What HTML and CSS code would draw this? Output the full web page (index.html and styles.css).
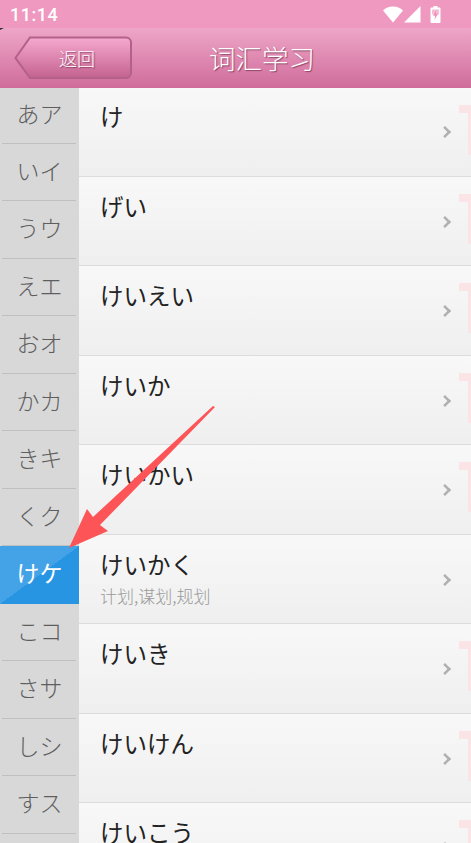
FILE: index.html
```html
<!DOCTYPE html>
<html lang="en">
<head>
    <meta charset="UTF-8">
    <meta name="viewport" content="width=device-width, initial-scale=1.0">
    <title>词汇学习</title>
    <link rel="stylesheet" href="styles.css">
</head>
<body>
    <!-- Status bar -->
    <div class="status-bar">
        <span class="clock">11:14</span>
        <div class="status-icons">
            <svg width="20" height="17" viewBox="0 0 20 17"><path d="M0 4.500C2.600 1.800 6 .5 10 .5s7.400 1.300 10 4L10 16.500z" fill="#fff"/></svg>
            <svg width="17" height="17" viewBox="0 0 17 17"><path d="M0 16.500L16.500 0v16.500z" fill="#fff"/></svg>
            <svg class="battery" width="11" height="17" viewBox="0 0 11 17"><path d="M3.500 0h4v1.500h2a1 1 0 0 1 1 1V16a1 1 0 0 1-1 1h-8a1 1 0 0 1-1-1V2.500a1 1 0 0 1 1-1h2z" fill="#fff"/><path d="M2 3.500h7v5H2z" fill="#f7bcd6"/><path d="M6.500 3.500L3 9.800h2.200L4.400 14 8 7.800H5.800z" fill="#ee90b9"/></svg>
        </div>
    </div>

    <!-- Title bar -->
    <header class="title-bar">
        <div class="back-button">
            <svg class="back-shape" width="119" height="44" viewBox="0 0 119 44">
                <defs>
                    <linearGradient id="backFill" x1="0" y1="0" x2="0" y2="1">
                        <stop offset="0" stop-color="#f6a9cf"/>
                        <stop offset="1" stop-color="#c4628f"/>
                    </linearGradient>
                </defs>
                <path d="M16 1.500H112a5 5 0 0 1 5 5V37a5 5 0 0 1-5 5H16L1.500 22z" fill="url(#backFill)" stroke="#b3608a" stroke-width="2"/>
            </svg>
            <span class="back-label">返回</span>
        </div>
        <h1>词汇学习</h1>
    </header>

    <main class="content">
        <!-- Kana index -->
        <nav class="kana-list">
            <div class="kana">あア</div>
            <div class="kana">いイ</div>
            <div class="kana">うウ</div>
            <div class="kana">えエ</div>
            <div class="kana">おオ</div>
            <div class="kana">かカ</div>
            <div class="kana">きキ</div>
            <div class="kana">くク</div>
            <div class="kana active">けケ</div>
            <div class="kana">こコ</div>
            <div class="kana">さサ</div>
            <div class="kana">しシ</div>
            <div class="kana">すス</div>
        </nav>

        <!-- Word list -->
        <div class="word-list">
            <div class="word"><div class="word-text">け</div><span class="chevron"></span><span class="mark"></span></div>
            <div class="word"><div class="word-text">げい</div><span class="chevron"></span><span class="mark"></span></div>
            <div class="word"><div class="word-text">けいえい</div><span class="chevron"></span><span class="mark"></span></div>
            <div class="word"><div class="word-text">けいか</div><span class="chevron"></span><span class="mark"></span></div>
            <div class="word"><div class="word-text">けいかい</div><span class="chevron"></span><span class="mark"></span></div>
            <div class="word"><div class="word-text">けいかく</div><div class="word-meaning">计划,谋划,规划</div><span class="chevron"></span></div>
            <div class="word"><div class="word-text">けいき</div><span class="chevron"></span><span class="mark"></span></div>
            <div class="word"><div class="word-text">けいけん</div><span class="chevron"></span><span class="mark"></span></div>
            <div class="word"><div class="word-text">けいこう</div><span class="chevron"></span><span class="mark"></span></div>
        </div>
    </main>

    <!-- Red annotation arrow -->
    <svg class="arrow" width="471" height="843" viewBox="0 0 471 843">
        <path d="M215 407L100 525L108 531L69 548L87 509L93 517L213 406z" fill="#fd5458"/>
    </svg>
</body>
</html>
```

FILE: styles.css
```css
html, body {
    margin: 0;
    padding: 0;
    height: 100%;
    overflow: hidden;
}

body {
    position: relative;
    display: flex;
    flex-direction: column;
    font-family: "Noto Sans CJK JP", "Noto Sans", sans-serif;
    background-color: #f5f5f5;
}

.status-bar {
    height: 28px;
    flex: none;
    display: flex;
    justify-content: space-between;
    align-items: center;
    padding: 0 30px 0 10px;
    background-color: #f099c0;
    color: #fff;
}

.clock {
    font-family: Roboto, sans-serif;
    font-size: 18px;
    font-weight: 500;
    letter-spacing: 0.5px;
}

.status-icons {
    display: flex;
    align-items: center;
    gap: 1px;
}

.status-icons svg {
    display: block;
}

.status-icons .battery {
    margin-left: 8px;
}

.title-bar {
    height: 60px;
    flex: none;
    box-sizing: border-box;
    padding-left: 53px;
    display: flex;
    align-items: center;
    justify-content: center;
    position: relative;
    background: linear-gradient(to bottom, #eea6c8, #cf6c9a);
}

.title-bar::before {
    content: "";
    position: absolute;
    left: 0;
    top: 0;
    border-top: 2px solid #333;
    border-right: 4px solid transparent;
}

.title-bar h1 {
    margin: 0;
    font-size: 26.500px;
    font-weight: 300;
    line-height: 60px;
    color: #fff;
    text-shadow: 1px 1px 1px rgba(90, 30, 60, 0.6);
}

.back-button {
    position: absolute;
    left: 14px;
    top: 8px;
    width: 119px;
    height: 44px;
}

.back-shape {
    display: block;
}

.back-label {
    position: absolute;
    left: 45px;
    top: 0;
    line-height: 44px;
    font-size: 18px;
    font-weight: 300;
    color: #fff;
    text-shadow: 1px 1px 1px rgba(90, 30, 60, 0.6);
}

.content {
    flex: 1;
    min-height: 0;
    display: flex;
    overflow: hidden;
}

.kana-list {
    width: 79px;
    flex: none;
    background-color: #d8d8d8;
}

.kana {
    height: 57.5px;
    box-sizing: border-box;
    padding-bottom: 6px;
    display: flex;
    align-items: center;
    justify-content: center;
    position: relative;
    font-size: 23px;
    font-weight: 300;
    color: #5e5e5e;
}

.kana:first-child {
    height: 55.800px;
}

.kana::after {
    content: "";
    position: absolute;
    left: 2px;
    right: 3px;
    bottom: 0;
    height: 1px;
    background-color: #c0c0c0;
}

.kana.active {
    color: #fff;
    font-weight: 400;
    background: linear-gradient(to bottom right, #44a3e6 50%, #2795e2 50%);
}

.kana.active::after {
    left: 79px;
    right: auto;
    bottom: 22px;
    width: 0;
    height: 0;
    background: none;
    border-top: 5px solid transparent;
    border-bottom: 5px solid transparent;
    border-left: 4px solid #2795e2;
}

.word-list {
    flex: 1;
    min-width: 0;
}

.word {
    height: 89.5px;
    box-sizing: border-box;
    padding: 13px 0 0 21px;
    position: relative;
    overflow: hidden;
    background: linear-gradient(to bottom, #f8f8f8, #efefef);
    border-bottom: 1px solid #dcdcdc;
}

.word:first-child {
    height: 88.5px;
    padding-top: 12px;
}

.word-text {
    font-size: 23.500px;
    font-weight: 400;
    line-height: 32px;
    color: #222;
}

.word-meaning {
    font-size: 17px;
    font-weight: 300;
    line-height: 24px;
    margin-top: 4px;
    color: #999;
}

.chevron {
    position: absolute;
    left: 361px;
    top: 40px;
    width: 7px;
    height: 7px;
    border-top: 3px solid #b0b0b0;
    border-right: 3px solid #b0b0b0;
    transform: rotate(45deg) scale(0.85);
}

.word:first-child .chevron {
    top: 39px;
}

.mark {
    position: absolute;
    right: 0;
    top: 17px;
    width: 12px;
    height: 50px;
    box-sizing: border-box;
    border-top: 8px solid #fbe4e6;
    border-right: 3px solid #fbe4e6;
}

.arrow {
    position: absolute;
    left: 0;
    top: 0;
    pointer-events: none;
}
```
